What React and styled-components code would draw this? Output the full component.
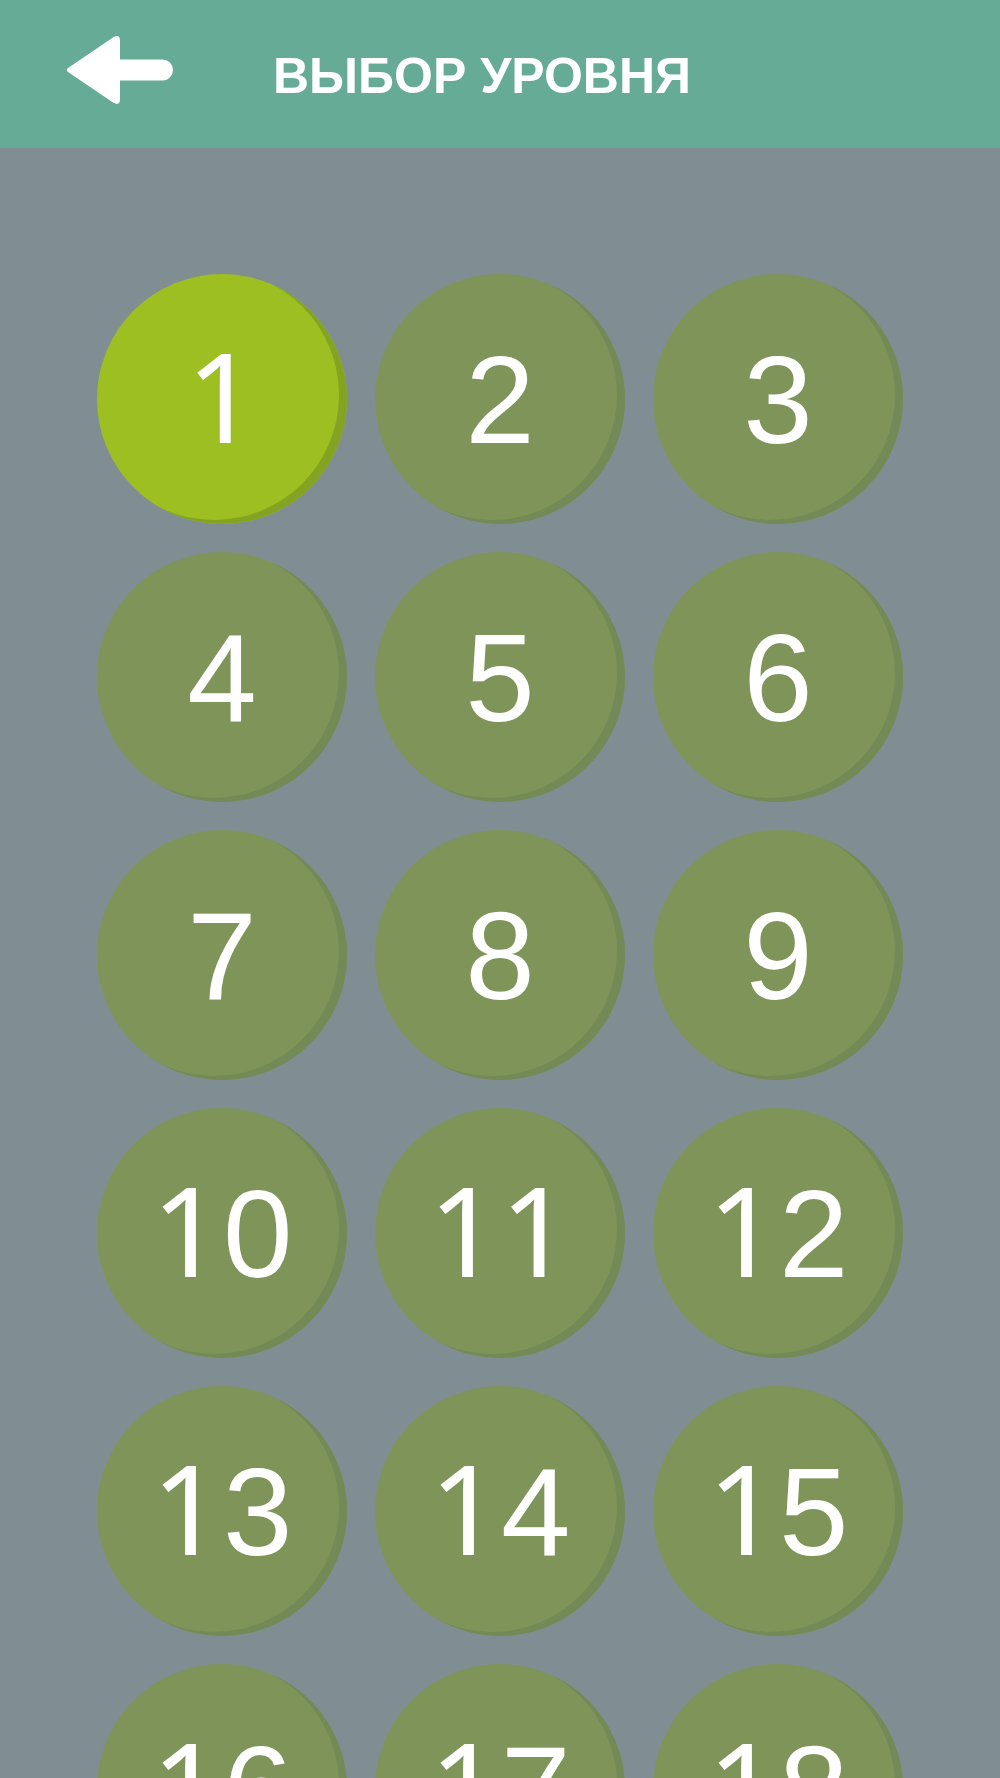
import React from 'react';
import styled, { createGlobalStyle } from 'styled-components';

const GlobalStyle = createGlobalStyle`
  html, body {
    margin: 0;
    padding: 0;
    background-color: #808e93;
    font-family: "Liberation Sans", Arial, sans-serif;
  }
`

const Screen = styled.div`
  width: 1000px;
  height: 1778px;
  overflow: hidden;
  display: flex;
  flex-direction: column;
  background-color: #808e93;
`

const Header = styled.header`
  flex: 0 0 148px;
  display: flex;
  align-items: center;
  gap: 100px;
  padding-left: 66px;
  background-color: #66ab96;
`

const BackButton = styled.button`
  display: flex;
  margin-bottom: 8px;
  padding: 0;
  border: none;
  background: none;
  cursor: pointer;
`

const Title = styled.h1`
  margin: 3px 0 0;
  color: #fff;
  font-family: "Liberation Sans", Arial, sans-serif;
  font-weight: 700;
  font-size: 50px;
  line-height: 1;
`

const Grid = styled.div`
  display: grid;
  grid-template-columns: repeat(3, 250px);
  gap: 28px;
  justify-content: center;
  padding-top: 126px;
`

const Level = styled.div`
  width: 250px;
  height: 250px;
  border-radius: 50%;
  display: flex;
  align-items: center;
  justify-content: center;
  background-color: ${p => (p.$active ? '#9dbf22' : '#7e9459')};
  box-shadow: inset -8px -4px 0 ${p => (p.$active ? '#84a322' : '#738956')};
  color: #fff;
  font-family: "Liberation Sans", Arial, sans-serif;
  font-size: 125px;
  font-weight: 400;
  line-height: 1;
`

const Label = styled.span`
  display: block;
  white-space: nowrap;
`

/* Liberation's "1" has a foot, the reference's has none */
const Digit = styled.span`
  font-family: ${p => (p.$one ? '"Noto Sans", "Liberation Sans", sans-serif' : 'inherit')};
  line-height: ${p => (p.$one ? 0.9 : 'inherit')};
`

const BackArrow = () => (
  <svg width="107" height="70" viewBox="0 0 107 70">
    <path
      d="M2 33 L47 2.5 Q54 -1.5 54 6 L54 24.5 L96.5 24.5 A10.5 10.5 0 0 1 96.5 45.5 L54 45.5 L54 64 Q54 71.5 47 67.5 L2 37 Q-0.5 35 2 33 Z"
      fill="#fff"
    />
  </svg>
)

const levels = Array.from({ length: 18 }, (_, i) => i + 1);

const App = () => {
  return (
    <Screen>
      <GlobalStyle />
      <Header>
        <BackButton aria-label="Назад">
          <BackArrow />
        </BackButton>
        <Title>ВЫБОР УРОВНЯ</Title>
      </Header>
      <Grid>
        {levels.map(n => (
          <Level key={n} $active={n === 1}>
            <Label>
              {String(n).split('').map((d, i) => (
                <Digit key={i} $one={d === '1'}>{d}</Digit>
              ))}
            </Label>
          </Level>
        ))}
      </Grid>
    </Screen>
  );
}

export default App;
